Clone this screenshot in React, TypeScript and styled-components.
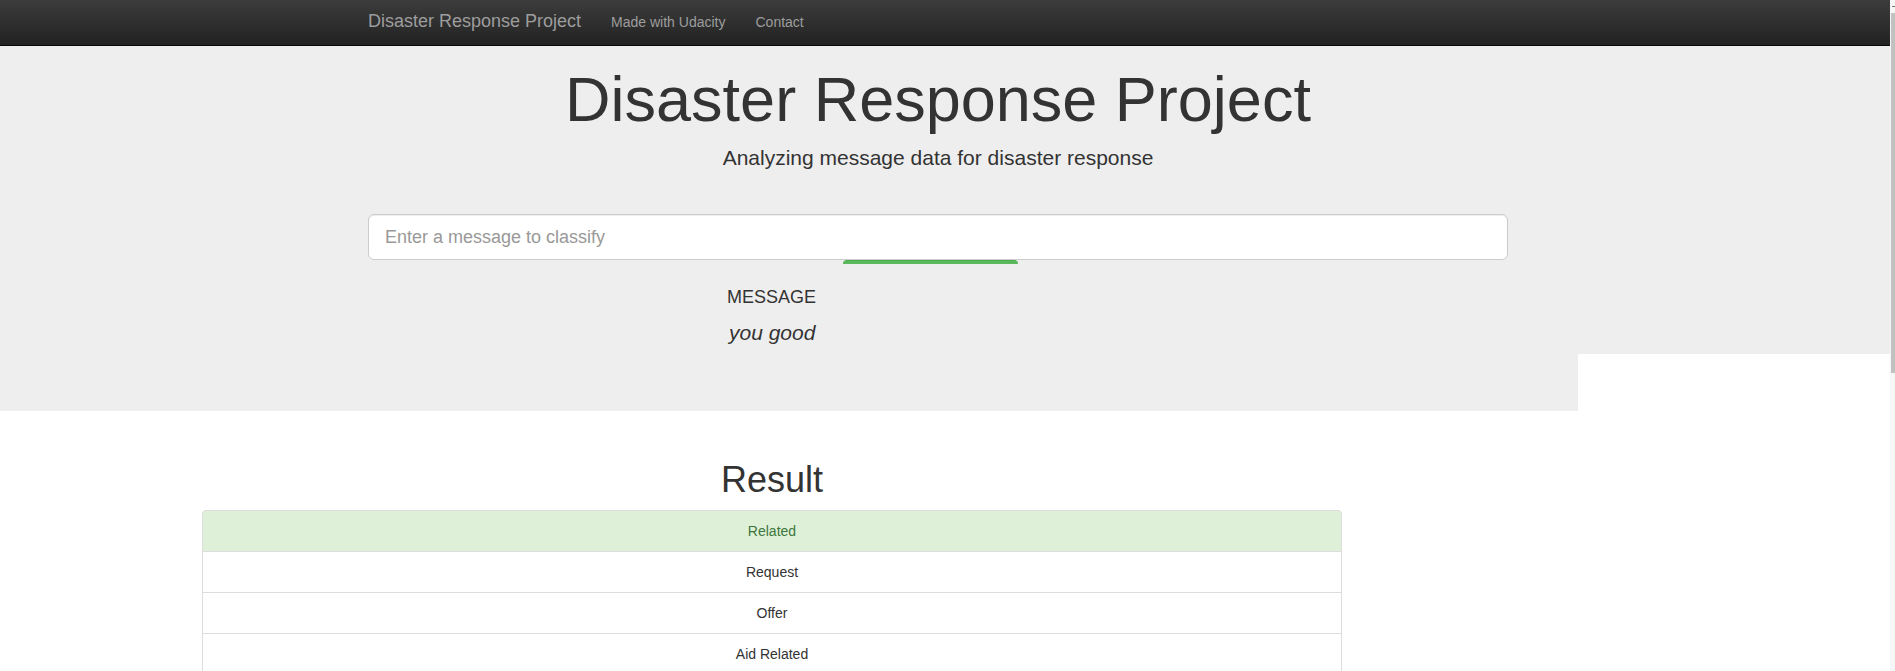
import React from "react";
import styled, { createGlobalStyle } from "styled-components";

const GlobalStyle = createGlobalStyle`
  html, body {
    margin: 0;
    padding: 0;
    background: #fff;
  }
  body {
    font-family: "Liberation Sans", Arial, Helvetica, sans-serif;
    font-size: 14px;
    line-height: 1.42857;
    color: #333;
    overflow: hidden;
  }
  * { box-sizing: border-box; }
`;

const Page = styled.div`
  width: 1890px;
`;

const Navbar = styled.nav`
  height: 46px;
  background: linear-gradient(to bottom, #3c3c3c 0%, #222 100%);
  border-bottom: 1px solid #080808;
`;

const NavInner = styled.div`
  display: flex;
  align-items: flex-start;
  padding-left: 368px;
`;

const Brand = styled.a`
  font-size: 18px;
  line-height: 20px;
  padding: 11px 15px 0 0;
  color: #9d9d9d;
  text-decoration: none;
`;

const NavLink = styled.a`
  font-size: 14px;
  line-height: 20px;
  padding: 12px 15px 0;
  color: #9d9d9d;
  text-decoration: none;
`;

const Jumbotron = styled.section`
  position: relative;
  background: #eee;
  padding: 18px 0 63px;
`;

const JumboContainer = styled.div`
  margin-left: 368px;
  width: 1140px;
  text-align: center;
`;

const Title = styled.h1`
  margin: 0;
  font-size: 63px;
  line-height: 70px;
  font-weight: 400;
  color: #333;
`;

const Lead = styled.p`
  margin: 9px 0 0;
  font-size: 21px;
  line-height: 30px;
  font-weight: 400;
`;

const MessageInput = styled.input`
  display: block;
  margin-top: 41px;
  width: 100%;
  height: 46px;
  padding: 10px 16px;
  font-family: "Liberation Sans", Arial, Helvetica, sans-serif;
  font-size: 18px;
  color: #555;
  background: #fff;
  border: 1px solid #ccc;
  border-radius: 6px;
  box-shadow: inset 0 1px 1px rgba(0, 0, 0, 0.075);
  outline: none;
  &::placeholder {
    color: #999;
  }
`;

const ButtonStrip = styled.div`
  margin-left: 475px;
  width: 175px;
  height: 4px;
  background: #5cb85c;
  border-top: 1px solid #4cae4c;
  border-radius: 5px 5px 0 0;
`;

const MessageBlock = styled.div`
  margin: 23px 0 0 359px;
  text-align: left;
`;

const MessageLabel = styled.div`
  font-size: 18px;
  line-height: 20px;
`;

const MessageText = styled.div`
  margin-top: 11px;
  padding-left: 2px;
  font-size: 21px;
  line-height: 30px;
  font-style: italic;
`;

const WhitePatch = styled.div`
  position: absolute;
  right: 0;
  bottom: 0;
  width: 312px;
  height: 57px;
  background: #fff;
`;

const ResultSection = styled.section`
  margin-left: 202px;
  width: 1140px;
`;

const ResultTitle = styled.h1`
  margin: 49px 0 0;
  font-size: 36px;
  line-height: 40px;
  font-weight: 400;
  text-align: center;
`;

const List = styled.ul`
  list-style: none;
  margin: 10px 0 20px;
  padding: 0;
`;

const Item = styled.li<{ $success?: boolean }>`
  padding: 10px 15px;
  margin-bottom: -1px;
  border: 1px solid #ddd;
  font-size: 14px;
  line-height: 20px;
  text-align: center;
  background: ${(p) => (p.$success ? "#dff0d8" : "#fff")};
  color: ${(p) => (p.$success ? "#3c763d" : "#333")};
  &:first-child {
    border-top-left-radius: 4px;
    border-top-right-radius: 4px;
  }
`;

const ScrollTrack = styled.div`
  position: fixed;
  top: 0;
  right: 0;
  width: 5px;
  height: 100vh;
  background: #f6f6f6;
`;

const ScrollThumb = styled.div`
  position: absolute;
  top: 13px;
  left: 1px;
  right: 0;
  height: 360px;
  background: #c1c1c1;
`;

const ScrollArrow = styled.div`
  position: absolute;
  top: 6px;
  left: 2px;
  width: 3px;
  height: 1px;
  background: #777;
`;

const categories = [
  "Related", "Request", "Offer", "Aid Related", "Medical Help", "Medical Products",
  "Search And Rescue", "Security", "Military", "Child Alone", "Water", "Food",
  "Shelter", "Clothing", "Money", "Missing People", "Refugees", "Death",
  "Other Aid", "Infrastructure Related", "Transport", "Buildings", "Electricity",
  "Tools", "Hospitals", "Shops", "Aid Centers", "Other Infrastructure",
  "Weather Related", "Floods", "Storm", "Fire", "Earthquake", "Cold",
  "Other Weather", "Direct Report",
];

export default function App() {
  return (
    <>
      <GlobalStyle />
      <Page>
        <Navbar>
          <NavInner>
            <Brand href="#">Disaster Response Project</Brand>
            <NavLink href="#">Made with Udacity</NavLink>
            <NavLink href="#">Contact</NavLink>
          </NavInner>
        </Navbar>
        <Jumbotron>
          <JumboContainer>
            <Title>Disaster Response Project</Title>
            <Lead>Analyzing message data for disaster response</Lead>
            <MessageInput type="text" placeholder="Enter a message to classify" />
            <ButtonStrip />
            <MessageBlock>
              <MessageLabel>MESSAGE</MessageLabel>
              <MessageText>you good</MessageText>
            </MessageBlock>
          </JumboContainer>
          <WhitePatch />
        </Jumbotron>
        <ResultSection>
          <ResultTitle>Result</ResultTitle>
          <List>
            {categories.map((c, i) => (
              <Item key={c} $success={i === 0}>
                {c}
              </Item>
            ))}
          </List>
        </ResultSection>
      </Page>
      <ScrollTrack>
        <ScrollArrow />
        <ScrollThumb />
      </ScrollTrack>
    </>
  );
}
